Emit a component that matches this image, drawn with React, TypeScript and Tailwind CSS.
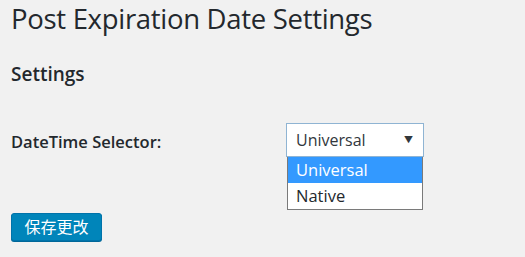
import React from "react";

export default function App() {
  return (
    <div
      className="w-[525px] h-[257px] bg-[#f1f1f1] text-[#23282d] overflow-hidden pl-[11px]"
      style={{ fontFamily: '"Open Sans", "Noto Sans CJK SC", sans-serif' }}
    >
      <h1 className="text-[27.5px] leading-[36px] pt-[1px] font-normal tracking-[-0.3px]">
        Post Expiration Date Settings
      </h1>
      <h2 className="mt-[25px] text-[19px] leading-[24px] font-semibold">Settings</h2>
      <div className="flex items-start mt-[37px]">
        <div className="w-[275px] pt-[9px] text-[16.5px] leading-[20px] font-semibold">
          DateTime Selector:
        </div>
        <div className="relative">
          <div className="w-[138px] h-[34px] bg-white border border-[#8fb4d3] flex items-center justify-between pl-[9px] pr-[10px] text-[16px] text-[#32373c]">
            <span>Universal</span>
            <span className="text-[9px]">▼</span>
          </div>
          <div className="absolute left-[1px] top-[34px] w-[136px] bg-white border border-[#7a7a7a] border-t-0 text-[16.5px] leading-[26px]">
            <div className="bg-[#3399ff] text-white pl-[8px] h-[26px]">Universal</div>
            <div className="pl-[8px] h-[26px] text-[#23282d]">Native</div>
          </div>
        </div>
      </div>
      <div className="mt-[56px]">
        <button className="w-[91px] h-[28px] rounded-[3px] bg-[#0085ba] border border-[#0073aa] shadow-[0_1px_0_#006799] text-white text-[16px] leading-[26px]">
          保存更改
        </button>
      </div>
    </div>
  );
}
